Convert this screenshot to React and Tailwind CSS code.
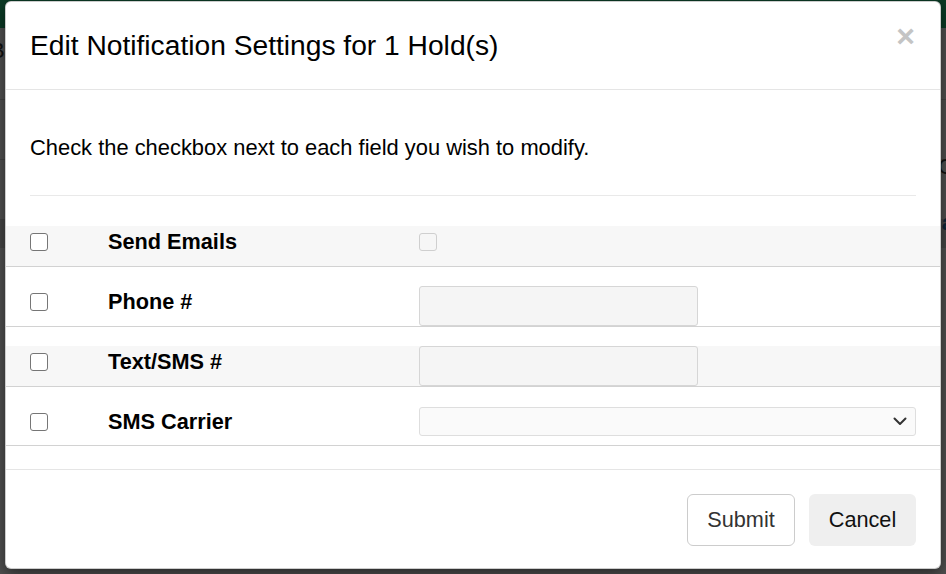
import React from 'react';

const rows = [
  { label: 'Send Emails', kind: 'checkbox', striped: true },
  { label: 'Phone #', kind: 'input' },
  { label: 'Text/SMS #', kind: 'input', striped: true },
  { label: 'SMS Carrier', kind: 'select' },
];

function Box({ disabled }) {
  return (
    <span
      className={`block w-[18px] h-[18px] rounded-[3px] border ${
        disabled ? 'border-[#cfcfcf] bg-[#f6f6f6]' : 'border-[#767676] bg-white'
      }`}
    />
  );
}

function Field({ kind }) {
  if (kind === 'checkbox') {
    return (
      <div className="pt-[7px]">
        <Box disabled />
      </div>
    );
  }
  if (kind === 'input') {
    return <div className="w-[279px] h-[40px] rounded-[3px] border border-[#d6d6d6] bg-[#f5f5f5]" />;
  }
  return (
    <div className="mt-[1px] flex-1 h-[29px] rounded-[3px] border border-[#dedede] bg-[#fafafa] flex items-center justify-end pr-[8px]">
      <svg width="14" height="9" viewBox="0 0 14 9" fill="none">
        <path d="M1.5 1.5 7 7l5.5-5.5" stroke="#333" strokeWidth="2" strokeLinecap="round" strokeLinejoin="round" />
      </svg>
    </div>
  );
}

export default function App() {
  return (
    <div
      className="relative w-[946px] h-[574px] overflow-hidden bg-[#505050]"
      style={{ fontFamily: '"Liberation Sans", Arial, sans-serif' }}
    >
      {/* dimmed page behind the dialog */}
      <div className="h-[28px] bg-[#0b3a25]" />
      <div className="flex justify-between h-[72px] border-b border-[#444] text-[22px] text-[#111]">
        <span className="-ml-[10px] mt-[6px]">B</span>
      </div>
      <div className="flex justify-end h-[60px] border-b border-[#444] text-[22px] text-[#111]">
        <span className="-mr-[8px] mt-[50px]">C</span>
      </div>
      <div className="flex justify-end h-[60px] border-b border-[#444] text-[22px] font-bold text-[#0f2438]">
        <span className="-mr-[8px] mt-[46px]">a</span>
      </div>
      <div className="h-[28px] bg-[#464646]" />

      {/* dialog */}
      <div className="absolute inset-0 pt-[1px] pl-[5px] pr-[5px]">
        <div className="bg-white rounded-[6px] border border-black/20 shadow-[0_5px_15px_rgba(0,0,0,0.5)] text-black">
          <div className="h-[88px] px-[24px] flex items-center justify-between border-b border-[#e5e5e5]">
            <h4 className="text-[28.2px] leading-[1.1] font-normal">Edit Notification Settings for 1 Hold(s)</h4>
            <button className="self-start mt-[18px] mr-[1px] text-[32px] leading-none font-bold text-[#c4c4c4]">×</button>
          </div>

          <div className="px-[24px] pt-[42px] pb-[23px]">
            <p className="text-[21.9px] leading-[32px]">Check the checkbox next to each field you wish to modify.</p>
            <hr className="mt-[31px] mb-[11px] border-0 border-t border-[#e9e9e9]" />

            <div className="-mx-[24px]">
              {rows.map((row, i) => (
                <div key={row.label} className="pt-[19px] border-b border-[#d2d2d2]">
                  <div
                    className={`flex items-start px-[24px] ${i === 3 ? 'h-[39px]' : 'h-[40px]'} ${
                      row.striped ? 'bg-[#f7f7f7]' : ''
                    }`}
                  >
                    <div className="w-[78px] pt-[7px]">
                      <Box />
                    </div>
                    <div className="w-[311px] pt-[1px] text-[21.7px] leading-[30px] font-bold">{row.label}</div>
                    <div className="flex-1 flex">
                      <Field kind={row.kind} />
                    </div>
                  </div>
                </div>
              ))}
            </div>
          </div>

          <div className="border-t border-[#e5e5e5] px-[24px] pt-[24px] pb-[22px] flex justify-end gap-[14px]">
            <button className="w-[108px] h-[52px] rounded-[6px] border border-[#cccccc] bg-white text-[21.7px] text-[#333]">
              Submit
            </button>
            <button className="w-[107px] h-[52px] rounded-[6px] bg-[#efefef] text-[21.7px] text-[#111]">
              Cancel
            </button>
          </div>
        </div>
      </div>
    </div>
  );
}
